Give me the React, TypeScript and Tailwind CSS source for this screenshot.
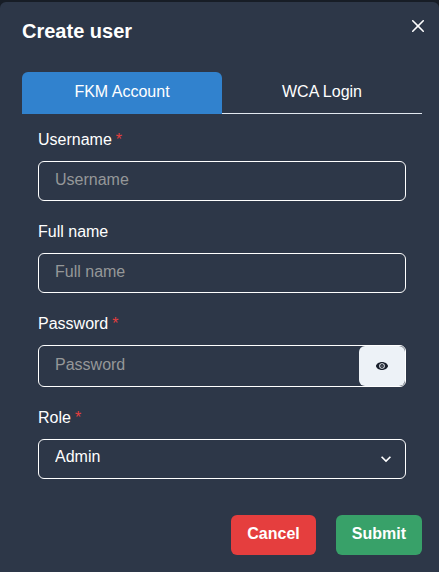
import { useState } from "react";
import type { ReactNode } from "react";

const fieldBox =
  "w-full rounded-md border border-white bg-transparent text-base text-white";

type FieldProps = {
  id: string;
  label: string;
  required?: boolean;
  children: ReactNode;
};

function Field({ id, label, required = false, children }: FieldProps) {
  return (
    <div className="flex flex-col gap-2">
      <label htmlFor={id} className="h-6 text-base leading-[22px]">
        {label}
        {required && <span className="ml-1 text-[#e53e3e]">*</span>}
      </label>
      {children}
    </div>
  );
}

function CloseIcon() {
  return (
    <svg viewBox="0 0 24 24" className="size-3" fill="currentColor" aria-hidden="true">
      <path d="M.439,21.44a1.5,1.5,0,0,0,2.122,2.121L11.823,14.3a.25.25,0,0,1,.354,0l9.262,9.263a1.5,1.5,0,1,0,2.122-2.121L14.3,12.177a.25.25,0,0,1,0-.354l9.263-9.262A1.5,1.5,0,0,0,21.439.44L12.177,9.7a.25.25,0,0,1-.354,0L2.561.44A1.5,1.5,0,0,0,.439,2.561L9.7,11.823a.25.25,0,0,1,0,.354Z" />
    </svg>
  );
}

function EyeIcon() {
  return (
    <svg viewBox="0 0 24 24" className="size-3" fill="currentColor" aria-hidden="true">
      <path
        fillRule="evenodd"
        d="M12 4C5.500 4 0 8.500 0 12s5.500 8 12 8 12-4.500 12-8-5.500-8-12-8zM12 6.400a5.600 5.600 0 1 1 0 11.200 5.600 5.600 0 0 1 0-11.200z"
      />
      <path
        fillRule="evenodd"
        d="M12 8.200a3.800 3.800 0 1 0 0 7.600 3.800 3.800 0 0 0 0-7.600zM12 10.800a1.200 1.200 0 1 1 0 2.400 1.200 1.200 0 0 1 0-2.400z"
      />
    </svg>
  );
}

function ChevronIcon() {
  return (
    <svg
      viewBox="0 0 24 24"
      className="pointer-events-none absolute right-2.5 top-2.5 size-5"
      fill="currentColor"
      aria-hidden="true"
    >
      <path d="M16.59 8.59L12 13.17 7.41 8.59 6 10l6 6 6-6z" />
    </svg>
  );
}

export default function App() {
  const [tab, setTab] = useState<"fkm" | "wca">("fkm");
  const [visible, setVisible] = useState(false);

  const tabClass = (active: boolean) =>
    active
      ? "flex-1 rounded-t-md bg-[#3182ce] pb-0.5 text-base text-white"
      : "flex-1 border-b border-[#e2e8f0] pb-px text-base text-white";

  return (
    <div className="min-h-screen bg-[#171d26] pt-0.5 font-['Liberation_Sans',Arial,sans-serif] text-white">
      <form
        role="dialog"
        aria-labelledby="title"
        className="min-h-[calc(100vh-2px)] rounded-t-md bg-[#2d3748] pb-4"
        onSubmit={(e) => e.preventDefault()}
      >
        <header className="flex items-start justify-between pl-[22px] pr-[5px] pt-2">
          <h1 id="title" className="pt-1.5 text-xl font-bold leading-[30px]">
            Create user
          </h1>
          <button type="button" aria-label="Close" className="flex size-8 items-center justify-center">
            <CloseIcon />
          </button>
        </header>

        <div className="ml-[22px] mr-[17px] mt-[26px]">
          <div role="tablist" className="flex h-[42px]">
            <button type="button" role="tab" aria-selected={tab === "fkm"} className={tabClass(tab === "fkm")} onClick={() => setTab("fkm")}>
              FKM Account
            </button>
            <button type="button" role="tab" aria-selected={tab === "wca"} className={tabClass(tab === "wca")} onClick={() => setTab("wca")}>
              WCA Login
            </button>
          </div>

          <div className="flex flex-col gap-5 px-4 pt-[15px]">
            <Field id="username" label="Username" required>
              <input
                id="username"
                placeholder="Username"
                className={`${fieldBox} h-10 px-4 pb-0.5 placeholder:text-[#959799]`}
              />
            </Field>
            <Field id="fullname" label="Full name">
              <input
                id="fullname"
                placeholder="Full name"
                className={`${fieldBox} h-10 px-4 pb-0.5 placeholder:text-[#959799]`}
              />
            </Field>
            <Field id="password" label="Password" required>
              <div className={`${fieldBox} flex`}>
                <input
                  id="password"
                  type={visible ? "text" : "password"}
                  placeholder="Password"
                  className="h-10 min-w-0 flex-1 bg-transparent px-4 pb-0.5 placeholder:text-[#959799]"
                />
                <button
                  type="button"
                  aria-label="Show password"
                  className="flex h-10 w-[46px] items-center justify-center rounded-md bg-[#edf2f7] text-[#1a202c]"
                  onClick={() => setVisible(!visible)}
                >
                  <EyeIcon />
                </button>
              </div>
            </Field>
            <Field id="role" label="Role" required>
              <div className="relative">
                <select id="role" className={`${fieldBox} h-10 appearance-none pb-1 pl-4 pr-8`}>
                  <option>Admin</option>
                </select>
                <ChevronIcon />
              </div>
            </Field>
          </div>

          <div className="mt-9 flex justify-end gap-5">
            <button type="button" className="h-10 rounded-md bg-[#e53e3e] px-4 pb-0.5 text-base font-bold">
              Cancel
            </button>
            <button type="submit" className="h-10 rounded-md bg-[#38a169] px-4 pb-0.5 text-base font-bold">
              Submit
            </button>
          </div>
        </div>
      </form>
    </div>
  );
}
